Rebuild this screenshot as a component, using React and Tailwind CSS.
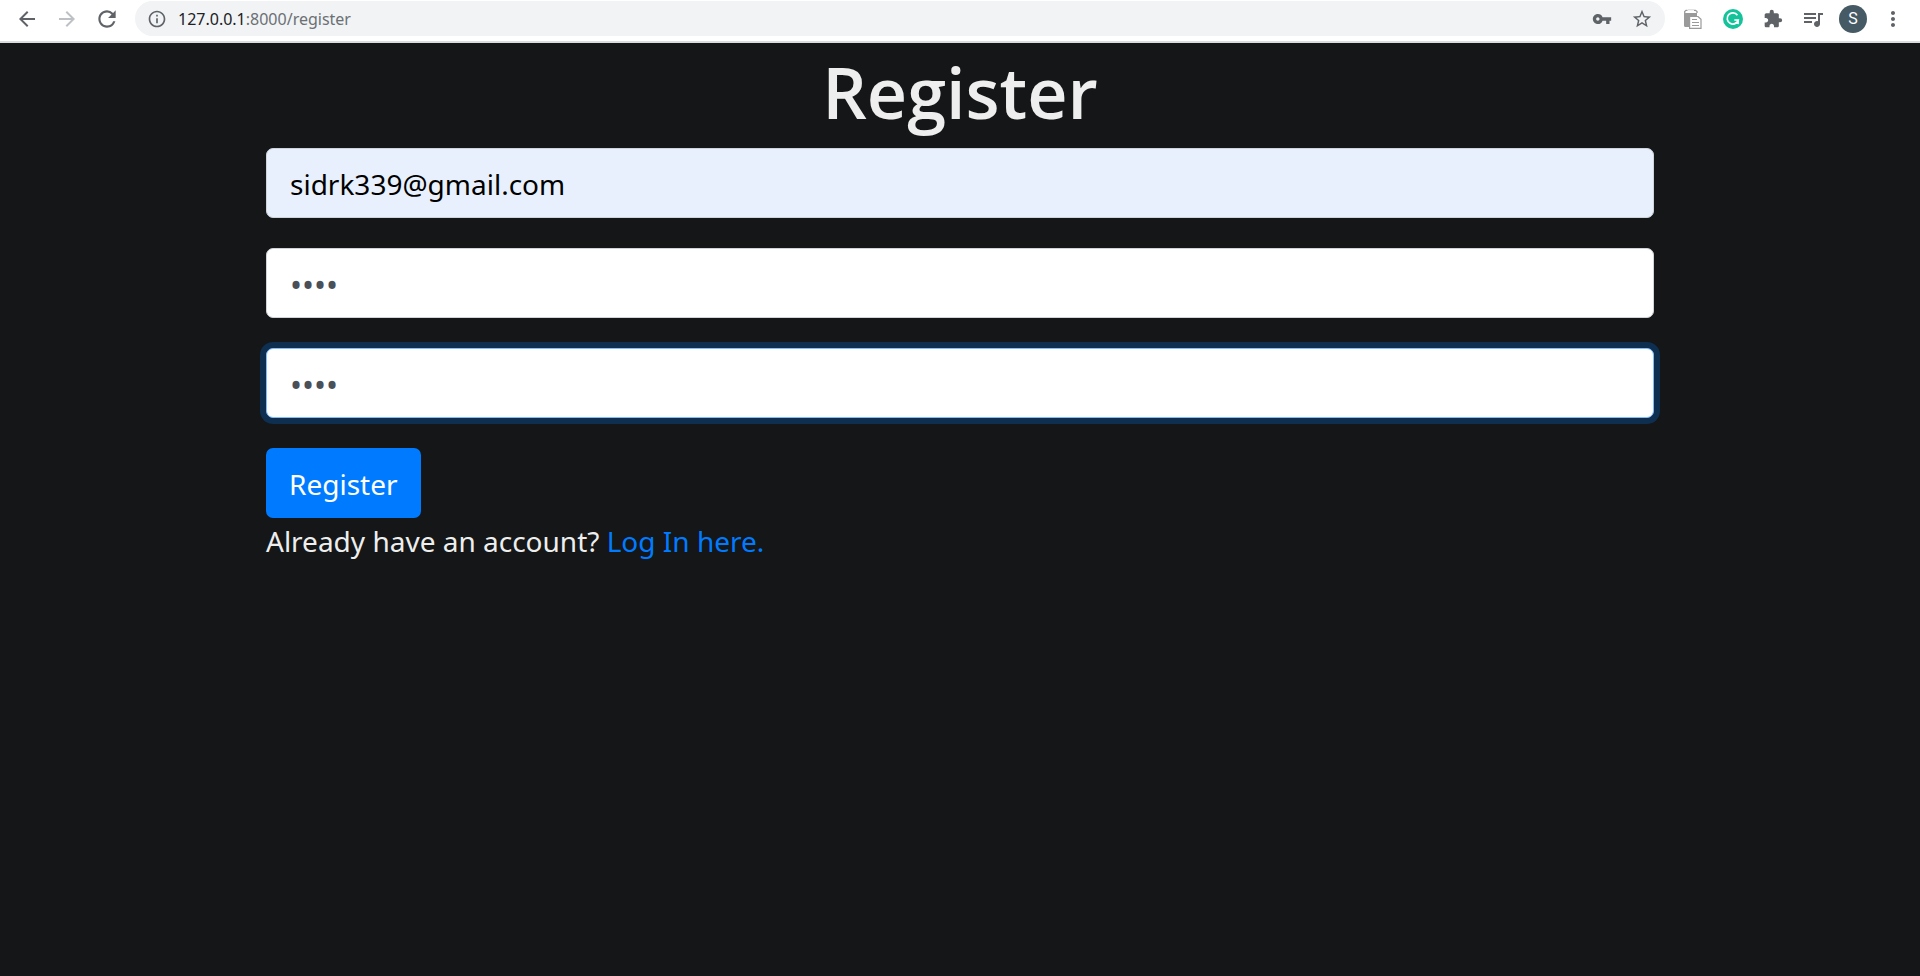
import { useState } from "react";
import {
  MdArrowBack,
  MdArrowForward,
  MdRefresh,
  MdInfoOutline,
  MdVpnKey,
  MdStarBorder,
  MdExtension,
  MdQueueMusic,
  MdMoreVert,
} from "react-icons/md";

function IconButton({ label, children, className = "text-[#5f6368]" }) {
  return (
    <button
      type="button"
      aria-label={label}
      className={`flex h-9 w-10 shrink-0 items-center justify-center ${className}`}
    >
      {children}
    </button>
  );
}

function ClipboardIcon() {
  return (
    <svg width="18" height="20" viewBox="0 0 18 20" aria-hidden="true">
      <path d="M0 4h13v3H5v11H1.500A1.500 1.500 0 0 1 0 16.500z" fill="#9a9a9a" />
      <path d="M.700 4V2.500L2 1.300h1.500M10 1.300h1.500L13 2.500V4" fill="none" stroke="#9a9a9a" strokeWidth="1.300" />
      <path d="M4.500.800h1M6.500.800h1M8.500.800h1" stroke="#a8a8a8" />
      <path d="M5.600 7.500H14l3 2.800v9.100H5.600z" fill="#fff" stroke="#9a9a9a" strokeWidth="1.200" />
      <path d="M8 10.500h5M8 13.500h7M8 16.500h7" stroke="#9a9a9a" strokeWidth="1.200" />
    </svg>
  );
}

function GrammarlyIcon() {
  return (
    <svg width="20" height="20" viewBox="0 0 20 20" aria-hidden="true">
      <circle cx="10" cy="10" r="10" fill="#15c39a" />
      <path
        d="M14.400 6.200A5.600 5.600 0 1 0 15.200 11H11.300M15.200 11A5.600 5.600 0 0 1 14 14"
        fill="none"
        stroke="#fff"
        strokeWidth="1.700"
      />
      <path d="M15.900 10.500v4.800l-3.500-.5z" fill="#fff" />
    </svg>
  );
}

function BrowserBar() {
  return (
    <header className="flex h-[43px] items-start border-b-2 border-[#dadce0] bg-white px-[7px] pt-px">
      <nav aria-label="Browser" className="flex">
        <IconButton label="Back">
          <MdArrowBack size={24} />
        </IconButton>
        <IconButton label="Forward" className="text-[#bdc1c6]">
          <MdArrowForward size={24} />
        </IconButton>
        <IconButton label="Reload">
          <MdRefresh size={26} />
        </IconButton>
      </nav>
      <div className="mx-2 flex h-[35px] min-w-0 flex-1 items-center rounded-full bg-[#f1f3f4] pr-[3px] pl-3">
        <MdInfoOutline size={20} className="shrink-0 text-[#5f6368]" />
        <div className="flex-1 pl-[11px] text-base text-[#6b7075]">
          <span className="text-[#202124]">127.0.0.1</span>:8000/register
        </div>
        <IconButton label="Passwords">
          <MdVpnKey size={20} />
        </IconButton>
        <IconButton label="Bookmark">
          <MdStarBorder size={22} />
        </IconButton>
      </div>
      <div className="flex">
        <IconButton label="Clipboard">
          <ClipboardIcon />
        </IconButton>
        <IconButton label="Grammarly">
          <GrammarlyIcon />
        </IconButton>
        <IconButton label="Extensions">
          <MdExtension size={20} />
        </IconButton>
        <IconButton label="Media">
          <MdQueueMusic size={24} />
        </IconButton>
        <IconButton label="Profile">
          <span className="flex size-7 items-center justify-center rounded-full bg-[#455a64] font-[Roboto,sans-serif] text-base text-white">
            S
          </span>
        </IconButton>
        <IconButton label="Menu">
          <MdMoreVert size={24} />
        </IconButton>
      </div>
    </header>
  );
}

function Field({ className, ...props }) {
  return (
    <input
      className={`mb-[30px] block h-[70px] w-full rounded-[7px] border px-[23px] pt-[2px] outline-none ${className}`}
      {...props}
    />
  );
}

export default function App() {
  const [email, setEmail] = useState("sidrk339@gmail.com");
  const [password, setPassword] = useState("1234");
  const [confirmation, setConfirmation] = useState("1234");

  return (
    <div className="flex min-h-screen flex-col bg-[#141617] font-['Noto_Sans','Open_Sans',sans-serif]">
      <BrowserBar />
      <main className="mx-auto w-full max-w-[1448px] px-[30px] pt-3 text-[28px] leading-[46px] text-[#eeeeee]">
        <h1 className="mb-[18px] text-center font-['Open_Sans','Noto_Sans',sans-serif] text-[70px] leading-[75px] font-semibold">
          Register
        </h1>
        <form onSubmit={(event) => event.preventDefault()}>
          <Field
            aria-label="Email Address"
            type="email"
            value={email}
            onChange={(event) => setEmail(event.target.value)}
            className="border-[#ced4da] bg-[#e8f0fe] text-black"
          />
          <Field
            aria-label="Password"
            type="password"
            value={password}
            onChange={(event) => setPassword(event.target.value)}
            className="border-[#ced4da] bg-white text-[32px] text-[#495057]"
          />
          <Field
            aria-label="Confirm Password"
            type="password"
            value={confirmation}
            onChange={(event) => setConfirmation(event.target.value)}
            className="border-[#80bdff] bg-white text-[32px] text-[#495057] ring-6 ring-[#0e2f50]"
          />
          <button type="submit" className="block h-[70px] rounded-[7px] bg-[#007bff] px-[23px] pt-[2px] text-white">
            Register
          </button>
        </form>
        <p>
          Already have an account?{" "}
          <a href="/login" className="text-[#007bff]">
            Log In here.
          </a>
        </p>
      </main>
    </div>
  );
}
